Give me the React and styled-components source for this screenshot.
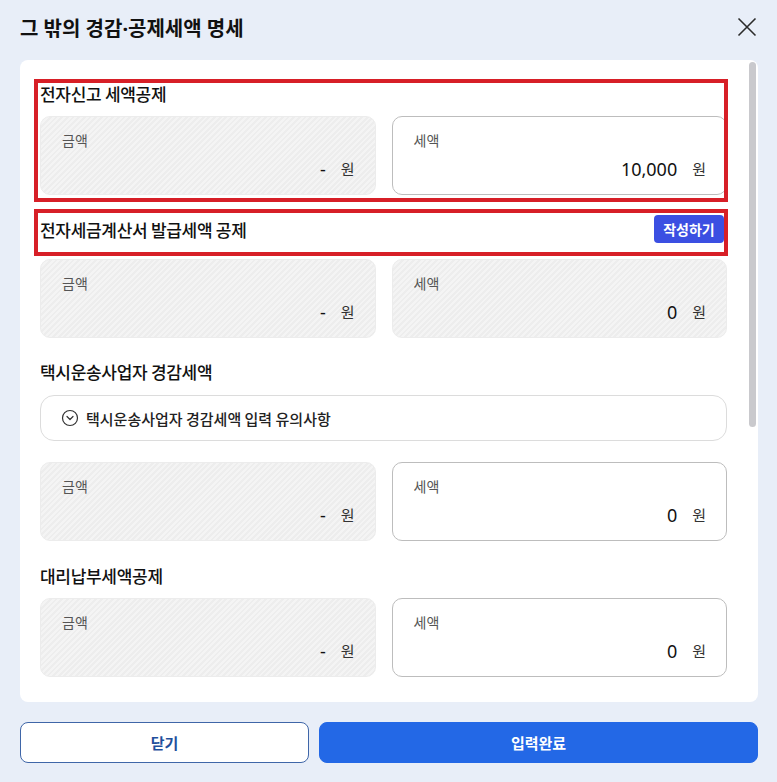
import styled, { createGlobalStyle } from "styled-components";
import { CircleChevronDown } from "lucide-react";

const GlobalStyle = createGlobalStyle`
  * { box-sizing: border-box; }
  html, body { margin: 0; padding: 0; }
  body {
    background: #e8eef8;
    font-family: "Noto Sans CJK KR", "Noto Sans", sans-serif;
    color: #111;
  }
`;

const Modal = styled.div`
  display: flex;
  flex-direction: column;
  height: 782px;
  padding: 0 19px 19px 20px;
`;

const Header = styled.header`
  display: flex;
  align-items: center;
  justify-content: space-between;
  height: 60px;
  padding-bottom: 6px;
`;

const Title = styled.h2`
  margin: 0;
  font-family: "Noto Sans", "Noto Sans CJK KR", sans-serif;
  font-size: 20px;
  font-weight: 700;
  color: #111;
`;

const CloseButton = styled.button`
  display: flex;
  padding: 0;
  margin-right: 1px;
  border: none;
  background: none;
  cursor: pointer;
`;

const Panel = styled.div`
  position: relative;
  flex: 1;
  min-height: 0;
  background: #fff;
  border-radius: 8px;
  overflow: hidden;
`;

const ScrollArea = styled.div`
  height: 100%;
  overflow-y: auto;
  scrollbar-width: none;
  padding: 16px 31px 0 20px;
`;

/* custom scroll thumb, the native bar is hidden */
const ScrollThumb = styled.div`
  position: absolute;
  top: 2px;
  right: 2px;
  width: 7px;
  height: 365px;
  border-radius: 4px;
  background: #c9c9cd;
`;

const Section = styled.section`
  display: flex;
  flex-direction: column;
  margin-top: ${(p) => p.$gap ?? 17}px;
  &:first-child { margin-top: 0; }
`;

/* red check-mark frame drawn over a block */
const Marked = styled.div`
  position: relative;
  display: flex;
  flex-direction: column;
  &::after {
    content: "";
    position: absolute;
    inset: ${(p) => p.$inset};
    border: 4px solid #d71f27;
    pointer-events: none;
  }
`;

const HeadingRow = styled.div`
  display: flex;
  align-items: center;
  justify-content: space-between;
  min-height: ${(p) => (p.$withAction ? 40 : 34)}px;
  margin-bottom: ${(p) => (p.$withAction ? 10 : 6)}px;
`;

const Heading = styled.h3`
  margin: 0;
  font-size: 17px;
  font-weight: 500;
  letter-spacing: -0.3px;
  color: #111;
`;

const ActionButton = styled.button`
  height: 28px;
  width: 70px;
  margin-right: 3px;
  padding: 0;
  border: none;
  border-radius: 4px;
  background: #3b4fe2;
  color: #fff;
  font-family: inherit;
  font-size: 14px;
  font-weight: 700;
  cursor: pointer;
`;

const Stack = styled.div`
  display: flex;
  flex-direction: column;
  gap: 21px;
  margin-top: 1px;
`;

const Notice = styled.button`
  display: flex;
  align-items: center;
  gap: 7px;
  height: 46px;
  padding: 0 20px;
  border: 1px solid #dcdcdc;
  border-radius: 14px;
  background: #fff;
  font-family: inherit;
  font-size: 15px;
  font-weight: 500;
  color: #222;
  text-align: left;
  cursor: pointer;
`;

const FieldGrid = styled.div`
  display: grid;
  grid-template-columns: 1fr 1fr;
  gap: 16px;
`;

const FieldBox = styled.div`
  display: flex;
  flex-direction: column;
  justify-content: space-between;
  height: 79px;
  padding: 13px 20px 13px 21px;
  border-radius: 10px;
  border: 1px solid ${(p) => (p.$readOnly ? "#ececec" : "#bdbdbd")};
  background: ${(p) =>
    p.$readOnly
      ? "repeating-linear-gradient(135deg, #f4f4f4 0 2px, #ededed 2px 4px)"
      : "#fff"};
`;

const FieldLabel = styled.span`
  font-size: 14px;
  color: #555;
  line-height: 20px;
`;

const FieldValue = styled.div`
  display: flex;
  align-items: center;
  justify-content: flex-end;
  gap: 15px;
  line-height: 24px;
`;

const Amount = styled.span`
  font-family: "Noto Sans", "Noto Sans CJK KR", sans-serif;
  font-size: 18px;
  color: #111;
`;

const Unit = styled.span`
  font-size: 15px;
  color: #333;
`;

const Footer = styled.footer`
  display: grid;
  grid-template-columns: 289px 1fr;
  gap: 10px;
  padding-top: 20px;
`;

const FooterButton = styled.button`
  height: 41px;
  border-radius: 8px;
  font-family: inherit;
  font-size: 15px;
  font-weight: 700;
  cursor: pointer;
  border: 1px solid ${(p) => (p.$primary ? "#2368e6" : "#3f66a8")};
  background: ${(p) => (p.$primary ? "#2368e6" : "#fff")};
  color: ${(p) => (p.$primary ? "#fff" : "#1f4f9c")};
`;

const Field = ({ label, value, readOnly }) => (
  <FieldBox $readOnly={readOnly}>
    <FieldLabel>{label}</FieldLabel>
    <FieldValue>
      <Amount>{value}</Amount>
      <Unit>원</Unit>
    </FieldValue>
  </FieldBox>
);

const FieldPair = ({ tax, taxReadOnly }) => (
  <FieldGrid>
    <Field label="금액" value="-" readOnly />
    <Field label="세액" value={tax} readOnly={taxReadOnly} />
  </FieldGrid>
);

const moreItems = [
  "현금영수증사업자 세액공제",
  "전자고지 세액공제",
  "기타",
  "합계",
];

const CloseIcon = () => (
  <svg width="20" height="20" viewBox="0 0 20 20" fill="none">
    <path d="M1.5 1.5L18.5 18.5M18.5 1.5L1.5 18.5" stroke="#2b2b2b" strokeWidth="1.6" />
  </svg>
);

export default function App() {
  return (
    <>
      <GlobalStyle />
      <Modal>
        <Header>
          <Title>그 밖의 경감·공제세액 명세</Title>
          <CloseButton aria-label="닫기">
            <CloseIcon />
          </CloseButton>
        </Header>

        <Panel>
          <ScrollArea>
            <Section>
              <Marked $inset="3px -1px -7px -6px">
                <HeadingRow>
                  <Heading>전자신고 세액공제</Heading>
                </HeadingRow>
                <FieldPair tax="10,000" />
              </Marked>
            </Section>

            <Section $gap={14}>
              <Marked $inset="0 -1px 3px -6px">
                <HeadingRow $withAction>
                  <Heading>전자세금계산서 발급세액 공제</Heading>
                  <ActionButton>작성하기</ActionButton>
                </HeadingRow>
              </Marked>
              <FieldPair tax="0" taxReadOnly />
            </Section>

            <Section $gap={16}>
              <HeadingRow>
                <Heading>택시운송사업자 경감세액</Heading>
              </HeadingRow>
              <Stack>
                <Notice>
                  <CircleChevronDown size={18} strokeWidth={1.6} color="#333" />
                  택시운송사업자 경감세액 입력 유의사항
                </Notice>
                <FieldPair tax="0" />
              </Stack>
            </Section>

            <Section>
              <HeadingRow>
                <Heading>대리납부세액공제</Heading>
              </HeadingRow>
              <FieldPair tax="0" />
            </Section>

            {moreItems.map((item) => (
              <Section key={item}>
                <HeadingRow>
                  <Heading>{item}</Heading>
                </HeadingRow>
                <FieldPair tax="0" />
              </Section>
            ))}
          </ScrollArea>
          <ScrollThumb />
        </Panel>

        <Footer>
          <FooterButton>닫기</FooterButton>
          <FooterButton $primary>입력완료</FooterButton>
        </Footer>
      </Modal>
    </>
  );
}
